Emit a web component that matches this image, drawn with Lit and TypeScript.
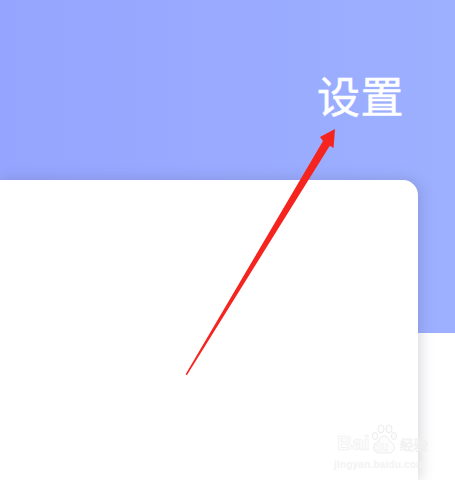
import { LitElement, html, css, svg } from "lit";
import { customElement } from "lit/decorators.js";

@customElement("app-root")
export class AppRoot extends LitElement {
  static styles = css`
    :host {
      display: block;
      position: relative;
      width: 455px;
      height: 480px;
      overflow: hidden;
      background: #ffffff;
      font-family: "Noto Sans CJK SC", "Liberation Sans", sans-serif;
    }
    .hero {
      height: 333px;
      box-sizing: border-box;
      background: linear-gradient(90deg, #95a4fe 0%, #9db0ff 100%);
      display: flex;
      justify-content: flex-end;
      align-items: flex-start;
      padding: 63px 51px 0 0;
    }
    .title {
      color: #ffffff;
      font-size: 43px;
      line-height: 62px;
      font-weight: 400;
      letter-spacing: 0.5px;
      -webkit-text-stroke: 0.5px #ffffff;
    }
    .card {
      width: 418px;
      height: 300px;
      margin-top: -153px;
      position: relative;
      background: #ffffff;
      border-radius: 0 15px 0 0;
      box-shadow: 2px 0 14px rgba(70, 70, 90, 0.22);
    }
    .arrow {
      position: absolute;
      left: 0;
      top: 0;
      width: 455px;
      height: 480px;
      pointer-events: none;
    }
    .mark {
      position: absolute;
      left: 337px;
      top: 425px;
      width: 110px;
      color: #f0f0f0;
      pointer-events: none;
    }
    .brand {
      display: flex;
      align-items: flex-end;
      font-family: "Liberation Sans", sans-serif;
      font-weight: 700;
      font-size: 21px;
      line-height: 24px;
      -webkit-text-stroke: 0.5px #ececec;
      color: #fdfdfd;
    }
    .paw {
      position: relative;
      width: 26px;
      height: 30px;
      margin-left: 1px;
    }
    .paw svg {
      position: absolute;
      left: 0;
      top: -2px;
    }
    .du {
      position: absolute;
      left: 3px;
      bottom: 2px;
      font-size: 12px;
      line-height: 12px;
      -webkit-text-stroke: 0.3px #ececec;
    }
    .cn {
      font-family: "Noto Sans CJK SC", sans-serif;
      font-size: 14px;
      line-height: 22px;
      font-weight: 400;
      margin-left: 3px;
      white-space: nowrap;
    }
    .url {
      font-family: "Liberation Sans", sans-serif;
      font-size: 10px;
      line-height: 14px;
      font-weight: 700;
      color: #f3f3f3;
      margin: 3px 0 0 -3px;
      letter-spacing: 0.2px;
      white-space: nowrap;
    }
  `;

  render() {
    return html`
      <div class="hero"><div class="title">设置</div></div>
      <div class="card"></div>
      <svg class="arrow" viewBox="0 0 455 480" aria-hidden="true">
        ${svg`<path d="M335 129 L333.500 148 L329.800 145.800 L187 375 L185.500 374.500 L323 141 L320 137 Z" fill="#f6241f"/>`}
      </svg>
      <div class="mark">
        <div class="brand">
          <span>Bai</span>
          <span class="paw">
            <svg width="26" height="32" viewBox="0 0 26 32">
              <g fill="#fdfdfd" stroke="#ececec" stroke-width="1">
                <ellipse cx="4" cy="13" rx="2.600" ry="3.500"/>
                <ellipse cx="10" cy="6" rx="3" ry="4"/>
                <ellipse cx="18" cy="6" rx="3" ry="4"/>
                <ellipse cx="23" cy="13" rx="2.600" ry="3.500"/>
                <path d="M13 13 C9 13 8 18 4 21 C1 24 3 30 8 30 H18 C23 30 25 24 22 21 C18 18 17 13 13 13 Z"/>
              </g>
            </svg>
            <span class="du">du</span>
          </span>
          <span class="cn">经验</span>
        </div>
        <div class="url">jingyan.baidu.com</div>
      </div>
    `;
  }
}
